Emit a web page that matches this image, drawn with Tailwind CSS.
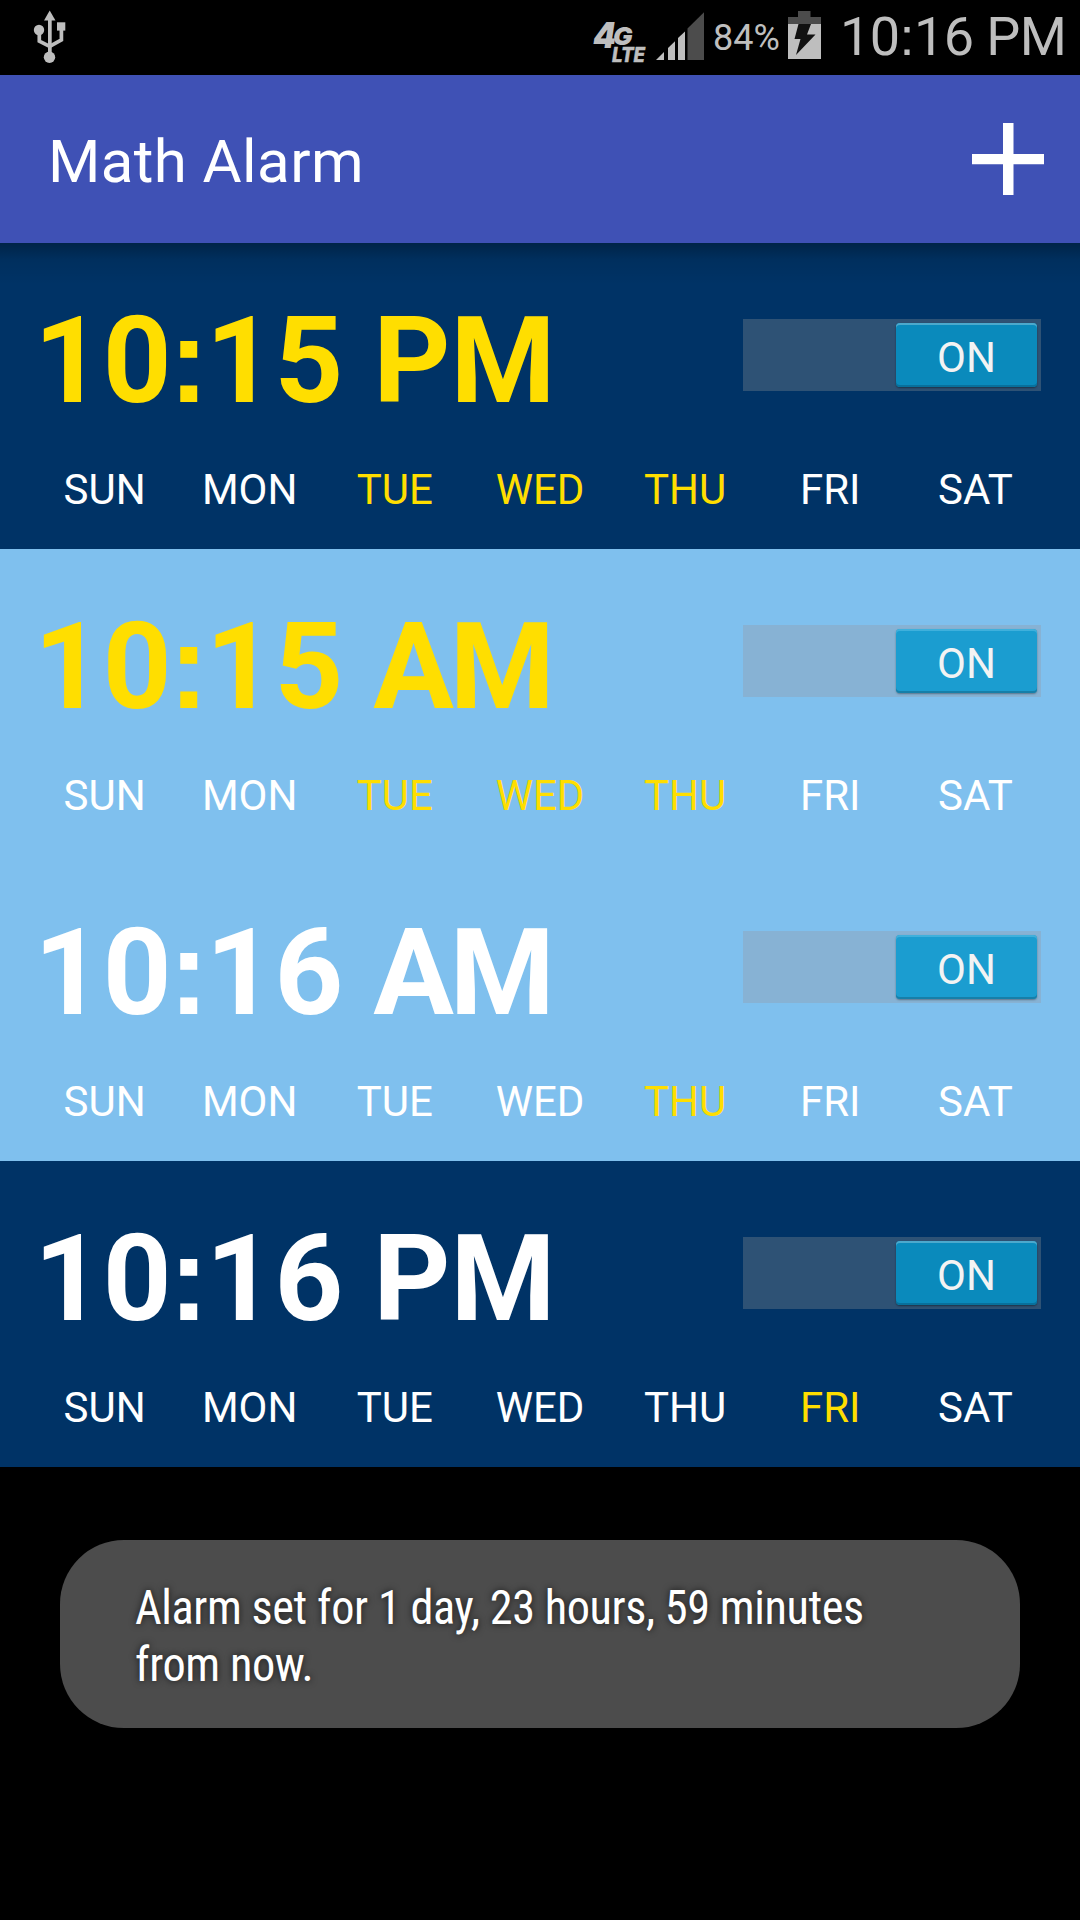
<!DOCTYPE html>
<html lang="en">
<head>
<meta charset="utf-8">
<title>Math Alarm</title>
<script src="https://cdn.jsdelivr.net/npm/@tailwindcss/browser@4"></script>
</head>
<body class="w-[1080px] h-[1920px] bg-black overflow-hidden font-['Roboto',sans-serif]">
<div class="flex flex-col h-full">
  <div class="relative h-[75px] flex-none bg-black text-[#bebebe]">
    <svg class="absolute inset-0" width="1080" height="75" viewBox="0 0 1080 75">
      <g fill="#bebebe">
        <path d="M49.700 10.500L55.500 20.500H44z"/>
        <circle cx="39" cy="30" r="5.200"/>
        <circle cx="49.500" cy="57.300" r="5.700"/>
        <rect x="57" y="22.300" width="8.300" height="8.300"/>
        <rect x="48" y="20" width="3.700" height="36"/>
        <path d="M39.300 32V41.200L49.700 46.300 61.400 40V30" fill="none" stroke="#bebebe" stroke-width="3.700"/>
        <g font-family="Inter, sans-serif" font-weight="900" font-style="italic">
          <text x="593" y="48" font-size="36" textLength="23" lengthAdjust="spacingAndGlyphs">4</text>
          <text x="613" y="45" font-size="25" textLength="19.500" lengthAdjust="spacingAndGlyphs">G</text>
          <text x="612" y="62" font-size="20.500" font-weight="800" textLength="33" lengthAdjust="spacingAndGlyphs" stroke="#bebebe" stroke-width=".5">LTE</text>
        </g>
        <path d="M656 60L664 52V60z"/>
        <path d="M668 60V48L675 41.300V60z"/>
        <path d="M678 60V38L685 31.500V60z"/>
        <path d="M687.500 60V28.500L704 12.300V60z" fill="#4c4c4c"/>
        <path d="M788 24V17H798V11H810.500V17H821V24z" fill="#4c4c4c"/>
        <rect x="788" y="24" width="33" height="35"/>
        <path d="M798.500 24H811L807 34.500H815.500L796 55 800.500 39H794.500z" fill="#111"/>
      </g>
    </svg>
    <div class="absolute left-[713px] top-[17px] text-[36px] leading-[42px] whitespace-nowrap">84%</div>
    <div class="absolute left-[840px] top-[5px] h-[63px] text-[54px] leading-[63px] whitespace-nowrap tracking-[-0.6px]">10<span class="font-['Liberation_Sans',sans-serif] leading-none">:</span>16 PM</div>
  </div>
  <header class="h-[168px] flex-none bg-[#3f51b5] flex items-center justify-between pl-[48px] pr-[36px] text-white">
    <h1 class="text-[60px] leading-[70px] pt-[5px] tracking-[0.4px] whitespace-nowrap">Math Alarm</h1>
    <svg width="72" height="72" viewBox="0 0 72 72"><path d="M31 0h10.500v31H72v10.300H41.500V72H31V41.300H0V31h31z" fill="#fff"/></svg>
  </header>
  <main id="alarms" class="flex-none"></main>
  <div class="flex-none mt-[73px] mx-[60px] h-[188px] rounded-[64px] bg-[#4c4c4c] px-[75px] pt-[39px]">
    <p class="origin-left scale-x-[0.965] text-white text-[48px] leading-[57px] [font-weight:450] tracking-[-0.45px] font-['Roboto_Condensed','Roboto',sans-serif] [font-stretch:75%] whitespace-nowrap [text-shadow:0_0_8px_rgba(0,0,0,0.7)]">Alarm set for 1 day, 23 hours, 59 minutes<br>from now.</p>
  </div>
</div>
<script>
const alarms = [
  { time: '10:15 PM', night: true, lit: true, on: ['TUE', 'WED', 'THU'] },
  { time: '10:15 AM', night: false, lit: true, on: ['TUE', 'WED', 'THU'] },
  { time: '10:16 AM', night: false, lit: false, on: ['THU'] },
  { time: '10:16 PM', night: true, lit: false, on: ['FRI'] },
];
const days = ['SUN', 'MON', 'TUE', 'WED', 'THU', 'FRI', 'SAT'];
const timeHtml = t => t
  .replace(':', `<span class="font-['Liberation_Sans',sans-serif] leading-none inline-block w-[34px] -indent-[3px] tracking-normal">:</span>`)
  .replace('A', '<span class="tracking-[-4px]">A</span>');
document.getElementById('alarms').innerHTML = alarms.map((a, i) => `
  <section class="h-[306px] ${a.night ? 'bg-[#003366]' : 'bg-[#7fc0ee]'}">
    <div class="${i === 0 ? 'bg-linear-to-b from-black/30 via-black/8 via-40% to-transparent' : ''} h-[42px]"></div>
    <div class="flex justify-between pl-[34px] pr-[39px] h-[150px]">
      <div class="pt-[6px] text-[120px] leading-[141px] font-bold whitespace-nowrap ${a.lit ? 'text-[#ffde00]' : 'text-white'}">${timeHtml(a.time)}</div>
      <div class="mt-[34px] w-[298px] h-[72px] flex justify-end pr-[4px] pt-[4px] ${a.night ? 'bg-[#2e5275]' : 'bg-[#87b2d4]'}">
        <div class="w-[141px] h-[64px] rounded-[4px] text-[42px] leading-[69px] text-center text-[#f3f3f3] ${a.night ? 'bg-[#0a8abc] shadow-[inset_0_2px_0_#4ca9cd,inset_0_-2px_0_#08709c,0_1px_2px_rgba(0,0,0,0.4)]' : 'bg-[#1b9dd0] shadow-[inset_0_2px_0_#3fb0dc,inset_0_-2px_0_#167fa9,0_1px_2px_rgba(0,0,0,0.35)]'}">ON</div>
      </div>
    </div>
    <div class="grid grid-cols-7 pl-[32px] pr-[32px] mt-[30px] text-[42px] leading-[49px] text-center">
      ${days.map(d => `<span class="${a.on.includes(d) ? 'text-[#ffde00]' : 'text-white'}">${d}</span>`).join('')}
    </div>
  </section>`).join('');
</script>
</body>
</html>
